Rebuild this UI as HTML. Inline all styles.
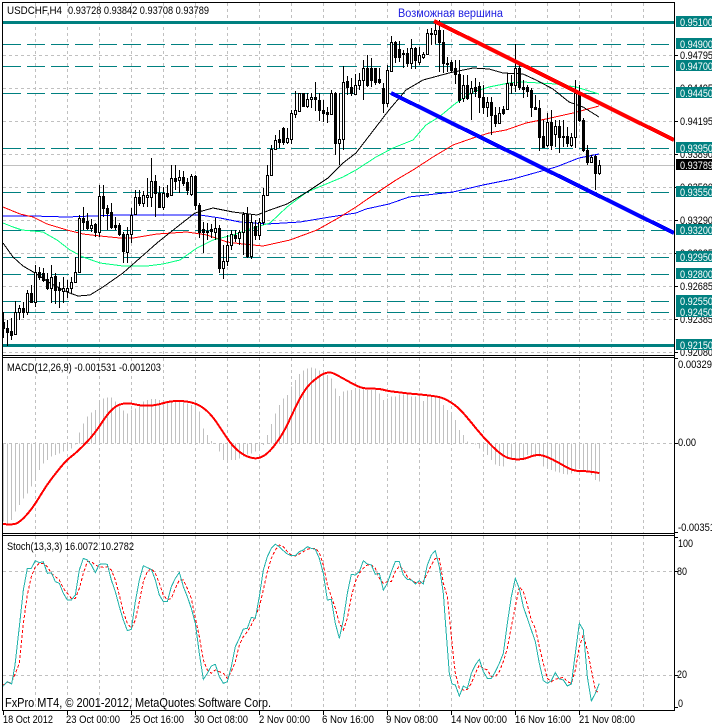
<!DOCTYPE html>
<html>
<head>
<meta charset="utf-8">
<title>USDCHF,H4</title>
<style>
html,body{margin:0;padding:0;background:#fff;}
svg{display:block;}
text{font-family:"Liberation Sans","DejaVu Sans",sans-serif;font-size:11px;fill:#000;}
.w{fill:#fff;}
.ns{vector-effect:non-scaling-stroke;fill:none;}
</style>
</head>
<body>
<svg width="712" height="727" viewBox="0 0 712 727" xmlns="http://www.w3.org/2000/svg">
<rect width="712" height="727" fill="#fff"/>

<!-- vertical grid -->
<g stroke="#c0c0c0" stroke-width="1" stroke-dasharray="3 3" fill="none" shape-rendering="crispEdges">
<path d="M35.5 3V355M67.5 3V355M99.5 3V355M131.5 3V355M163.5 3V355M195.5 3V355M227.5 3V355M259.5 3V355M291.5 3V355M323.5 3V355M355.5 3V355M387.5 3V355M419.5 3V355M451.5 3V355M483.5 3V355M515.5 3V355M547.5 3V355M579.5 3V355M611.5 3V355M643.5 3V355"/>
<path d="M3 55.5H674M3 88.5H674M3 121.5H674M3 154.5H674M3 187.5H674M3 220.5H674M3 253.5H674M3 286.5H674M3 319.5H674M3 352.5H674"/>
<path d="M35.5 358V533M67.5 358V533M99.5 358V533M131.5 358V533M163.5 358V533M195.5 358V533M227.5 358V533M259.5 358V533M291.5 358V533M323.5 358V533M355.5 358V533M387.5 358V533M419.5 358V533M451.5 358V533M483.5 358V533M515.5 358V533M547.5 358V533M579.5 358V533M611.5 358V533M643.5 358V533"/>
<path d="M3 443.5H674"/>
<path d="M35.5 536V710M67.5 536V710M99.5 536V710M131.5 536V710M163.5 536V710M195.5 536V710M227.5 536V710M259.5 536V710M291.5 536V710M323.5 536V710M355.5 536V710M387.5 536V710M419.5 536V710M451.5 536V710M483.5 536V710M515.5 536V710M547.5 536V710M579.5 536V710M611.5 536V710M643.5 536V710"/>
<path d="M3 571.5H674M3 675.5H674"/>
</g>

<!-- current price line -->
<path d="M3 165.5H674" stroke="#c0c0c0" fill="none" shape-rendering="crispEdges"/>

<!-- teal levels -->
<g stroke="#008080" fill="none" shape-rendering="crispEdges">
<path d="M3 22.5H674M3 345.5H674" stroke-width="3"/>
<path stroke-dasharray="18 6" d="M3 44.5H674M3 66.5H674M3 93.5H674M3 148.5H674M3 192.5H674M3 230.5H674M3 257.5H674M3 274.5H674M3 301.5H674M3 312.5H674"/>
</g>

<!-- moving averages -->
<g fill="none" stroke-width="1" shape-rendering="crispEdges">
<polyline stroke="#0000ff" points="3,216 33,216 67,217 117,215 157,215 200,215 220,218 240,222 267,224 300,222 330,217 356,213 366,209 389,204 409,197 453,192 483,185 513,179 556,167 579,158 599,154"/>
<polyline stroke="#ff0000" points="3,207 20,214 33,217 47,224 67,230 83,234 100,236 120,238 133,238 157,234 187,232 207,235 227,242 243,244 263,246 290,240 317,230 340,217 356,207 369,198 396,180 413,170 433,157 453,145 473,138 489,133 506,130 526,123 546,119 573,113 599,106"/>
<polyline stroke="#00ff7f" points="3,223 13,227 22,230 43,232 57,240 70,250 83,257 100,263 123,266 147,266 163,264 180,260 197,248 213,240 233,235 250,229 270,223 287,207 307,192 343,177 356,170 376,157 393,148 413,140 426,125 439,117 456,103 473,92 489,87 509,83 523,82 556,84 576,87 599,94"/>
<polyline stroke="#000000" points="3,243 13,257 23,266 35,273 50,283 67,292 78,296 90,295 103,287 123,273 140,258 157,243 177,227 195,213 213,208 233,212 257,215 270,210 287,204 307,192 328,178 343,163 356,153 366,140 376,127 389,110 406,90 423,80 449,73 473,68 489,69 503,73 523,74 536,80 553,89 569,102 583,107 599,117"/>
</g>

<!-- candle wicks -->
<path stroke="#000" stroke-width="1" fill="none" shape-rendering="crispEdges" d="M3.5 312V338M7.5 320V346M11.5 318V340M15.5 301V335M19.5 305V320M23.5 302V318M27.5 290V315M31.5 285V303M35.5 265V307M39.5 267V280M43.5 268V282M47.5 273V290M51.5 265V303M55.5 273V304M59.5 282V308M63.5 277V303M67.5 280V298M71.5 277V293M75.5 257V283M79.5 215V273M83.5 207V230M87.5 213V230M91.5 219V232M95.5 223V237M99.5 185V237M103.5 185V217M107.5 205V230M111.5 203V229M115.5 217V230M119.5 223V236M123.5 232V263M127.5 227V263M131.5 208V243M135.5 190V215M139.5 190V206M143.5 191V207M147.5 178V207M151.5 158V207M155.5 175V217M159.5 186V208M163.5 187V210M167.5 185V198M171.5 165V196M175.5 165V190M179.5 170V193M183.5 171V186M187.5 178V195M191.5 174V196M195.5 175V210M199.5 203V238M203.5 222V253M207.5 223V240M211.5 224V238M215.5 218V240M219.5 225V273M223.5 245V279M227.5 235V266M231.5 230V250M235.5 230V242M239.5 230V245M243.5 212V255M247.5 207V258M251.5 214V259M255.5 220V240M259.5 218V240M263.5 188V225M267.5 165V196M271.5 145V176M275.5 135V150M279.5 130V148M283.5 127V145M287.5 128V144M291.5 110V144M295.5 91V118M299.5 93V111M303.5 93V107M307.5 93V108M311.5 93V108M315.5 82V111M319.5 93V121M323.5 100V122M327.5 107V123M331.5 90V115M335.5 92V155M339.5 93V165M343.5 66V150M347.5 76V95M351.5 78V96M355.5 74V95M359.5 73V90M363.5 60V100M367.5 55V87M371.5 58V87M375.5 68V85M379.5 68V84M383.5 83V113M387.5 65V107M391.5 36V72M395.5 41V63M399.5 41V62M403.5 50V68M407.5 48V67M411.5 39V69M415.5 47V69M419.5 47V65M423.5 52V59M427.5 29V55M431.5 28V45M435.5 22V44M439.5 20V72M443.5 30V73M447.5 57V72M451.5 60V72M455.5 60V84M459.5 60V103M463.5 75V102M467.5 75V100M471.5 81V120M475.5 78V97M479.5 82V113M483.5 85V114M487.5 97V117M491.5 97V135M495.5 107V127M499.5 107V124M503.5 106V115M507.5 73V110M511.5 75V94M515.5 44V92M519.5 64V90M523.5 80V98M527.5 85V97M531.5 88V117M535.5 95V110M539.5 100V151M543.5 120V147M547.5 113V147M551.5 110V150M555.5 120V147M559.5 120V153M563.5 120V147M567.5 127V147M571.5 133V147M575.5 80V148M579.5 85V122M583.5 118V152M587.5 145V165M591.5 155V163M595.5 155V190M599.5 160V175"/>

<!-- bearish bodies -->
<path fill="#000" stroke="#000" stroke-width="1" shape-rendering="crispEdges" d="M2.5 322.5h2v6h-2zM6.5 328.5h2v4h-2zM10.5 331.5h2v4h-2zM22.5 308.5h2v4h-2zM30.5 293.5h2v9h-2zM38.5 272.5h2v5h-2zM42.5 273.5h2v7h-2zM46.5 279.5h2v9h-2zM54.5 276.5h2v14h-2zM58.5 288.5h2v2h-2zM82.5 218.5h2v4h-2zM86.5 221.5h2v7h-2zM94.5 224.5h2v8h-2zM102.5 196.5h2v12h-2zM106.5 208.5h2v5h-2zM110.5 212.5h2v15h-2zM114.5 225.5h2v2h-2zM118.5 225.5h2v9h-2zM122.5 234.5h2v17h-2zM138.5 197.5h2v6h-2zM154.5 181.5h2v12h-2zM158.5 193.5h2v14h-2zM166.5 193.5h2v3h-2zM174.5 178.5h2v3h-2zM182.5 177.5h2v6h-2zM186.5 182.5h2v8h-2zM194.5 176.5h2v29h-2zM198.5 205.5h2v27h-2zM202.5 229.5h2v3h-2zM206.5 231.5h2v1h-2zM210.5 229.5h2v2h-2zM218.5 228.5h2v40h-2zM234.5 235.5h2v3h-2zM246.5 214.5h2v42h-2zM254.5 226.5h2v9h-2zM278.5 139.5h2v3h-2zM282.5 128.5h2v14h-2zM302.5 93.5h2v13h-2zM314.5 97.5h2v2h-2zM318.5 100.5h2v10h-2zM322.5 110.5h2v3h-2zM326.5 112.5h2v2h-2zM334.5 93.5h2v50h-2zM346.5 81.5h2v6h-2zM350.5 87.5h2v6h-2zM366.5 68.5h2v17h-2zM370.5 68.5h2v12h-2zM374.5 68.5h2v14h-2zM378.5 79.5h2v3h-2zM382.5 88.5h2v15h-2zM394.5 42.5h2v15h-2zM398.5 49.5h2v8h-2zM402.5 53.5h2v1h-2zM406.5 53.5h2v10h-2zM414.5 48.5h2v12h-2zM430.5 33.5h2v1h-2zM438.5 30.5h2v12h-2zM442.5 42.5h2v21h-2zM446.5 63.5h2v1h-2zM450.5 62.5h2v8h-2zM454.5 68.5h2v6h-2zM458.5 74.5h2v26h-2zM466.5 85.5h2v13h-2zM474.5 87.5h2v4h-2zM478.5 86.5h2v11h-2zM482.5 97.5h2v10h-2zM490.5 102.5h2v13h-2zM494.5 115.5h2v8h-2zM502.5 109.5h2v4h-2zM510.5 83.5h2v2h-2zM518.5 68.5h2v19h-2zM522.5 87.5h2v2h-2zM526.5 87.5h2v4h-2zM530.5 90.5h2v17h-2zM534.5 107.5h2v2h-2zM538.5 108.5h2v29h-2zM542.5 136.5h2v11h-2zM550.5 122.5h2v23h-2zM558.5 126.5h2v11h-2zM562.5 136.5h2v1h-2zM566.5 136.5h2v7h-2zM578.5 93.5h2v27h-2zM582.5 120.5h2v30h-2zM586.5 150.5h2v12h-2zM594.5 156.5h2v17h-2z"/>

<!-- bullish bodies -->
<path fill="#fff" stroke="#000" stroke-width="1" shape-rendering="crispEdges" d="M14.5 312.5h2v22h-2zM18.5 308.5h2v4h-2zM26.5 293.5h2v19h-2zM34.5 272.5h2v30h-2zM50.5 277.5h2v11h-2zM62.5 288.5h2v3h-2zM66.5 288.5h2v3h-2zM70.5 282.5h2v6h-2zM74.5 272.5h2v10h-2zM78.5 218.5h2v54h-2zM90.5 225.5h2v3h-2zM98.5 196.5h2v36h-2zM126.5 234.5h2v18h-2zM130.5 215.5h2v19h-2zM134.5 197.5h2v17h-2zM142.5 195.5h2v8h-2zM146.5 195.5h2v2h-2zM150.5 181.5h2v16h-2zM162.5 193.5h2v14h-2zM170.5 178.5h2v17h-2zM178.5 177.5h2v3h-2zM190.5 176.5h2v18h-2zM214.5 228.5h2v4h-2zM222.5 261.5h2v7h-2zM226.5 245.5h2v16h-2zM230.5 234.5h2v11h-2zM238.5 232.5h2v6h-2zM242.5 214.5h2v18h-2zM250.5 222.5h2v34h-2zM258.5 222.5h2v13h-2zM262.5 195.5h2v27h-2zM266.5 175.5h2v20h-2zM270.5 149.5h2v26h-2zM274.5 140.5h2v9h-2zM286.5 138.5h2v4h-2zM290.5 113.5h2v26h-2zM294.5 110.5h2v4h-2zM298.5 93.5h2v18h-2zM306.5 99.5h2v7h-2zM310.5 97.5h2v2h-2zM330.5 93.5h2v21h-2zM338.5 139.5h2v4h-2zM342.5 82.5h2v57h-2zM354.5 85.5h2v9h-2zM358.5 80.5h2v5h-2zM362.5 68.5h2v12h-2zM386.5 70.5h2v33h-2zM390.5 42.5h2v29h-2zM410.5 48.5h2v15h-2zM418.5 55.5h2v7h-2zM422.5 54.5h2v3h-2zM426.5 33.5h2v21h-2zM434.5 30.5h2v4h-2zM462.5 85.5h2v13h-2zM470.5 88.5h2v5h-2zM486.5 102.5h2v5h-2zM498.5 113.5h2v10h-2zM506.5 83.5h2v26h-2zM514.5 68.5h2v17h-2zM546.5 122.5h2v23h-2zM554.5 126.5h2v8h-2zM570.5 137.5h2v8h-2zM574.5 93.5h2v44h-2zM590.5 157.5h2v5h-2zM598.5 165.5h2v8h-2z"/>

<!-- trend lines -->
<line x1="434" y1="21" x2="674" y2="140" stroke="#ff0000" stroke-width="4" shape-rendering="crispEdges"/>
<line x1="391" y1="93" x2="674" y2="233" stroke="#0000ff" stroke-width="4" shape-rendering="crispEdges"/>

<!-- MACD histogram -->
<g transform="translate(0,355) scale(1,0.33333)">
<path class="ns" stroke="#c0c0c0" stroke-width="1" shape-rendering="crispEdges" d="M3.5 265V500M7.5 265V505M11.5 265V495M15.5 265V470M19.5 265V450M23.5 265V430M27.5 265V415M31.5 265V395M35.5 265V375M39.5 265V345M43.5 265V325M47.5 265V315M51.5 265V305M55.5 265V300M59.5 265V295M63.5 265V290M67.5 265V288M71.5 265V280M75.5 265V268M79.5 265V233M83.5 265V205M87.5 265V185M91.5 265V172M95.5 265V165M99.5 265V140M103.5 265V130M107.5 265V127M111.5 265V127M115.5 265V140M119.5 265V155M123.5 265V167M127.5 265V175M131.5 265V163M135.5 265V160M139.5 265V150M143.5 265V140M147.5 265V135M151.5 265V132M155.5 265V132M159.5 265V135M163.5 265V137M167.5 265V140M171.5 265V140M175.5 265V140M179.5 265V135M183.5 265V135M187.5 265V145M191.5 265V150M195.5 265V150M199.5 265V170M203.5 265V220M207.5 265V240M211.5 265V258M219.5 265V290M223.5 265V315M227.5 265V318M231.5 265V315M235.5 265V315M239.5 265V310M243.5 265V305M247.5 265V298M251.5 265V295M255.5 265V290M259.5 265V285M263.5 265V270M267.5 265V240M271.5 265V207M275.5 265V175M279.5 265V150M283.5 265V130M287.5 265V120M291.5 265V95M295.5 265V75M299.5 265V57M303.5 265V47M307.5 265V40M311.5 265V37M315.5 265V40M319.5 265V47M323.5 265V52M327.5 265V60M331.5 265V70M335.5 265V100M339.5 265V123M343.5 265V110M347.5 265V107M351.5 265V105M355.5 265V105M359.5 265V100M363.5 265V100M367.5 265V105M371.5 265V105M375.5 265V105M379.5 265V115M383.5 265V135M387.5 265V130M391.5 265V125M395.5 265V125M399.5 265V118M403.5 265V118M407.5 265V118M411.5 265V125M415.5 265V125M419.5 265V125M423.5 265V138M427.5 265V125M431.5 265V125M435.5 265V125M439.5 265V130M443.5 265V150M447.5 265V165M451.5 265V180M455.5 265V195M459.5 265V225M463.5 265V240M467.5 265V260M475.5 265V268M479.5 265V280M483.5 265V290M487.5 265V300M491.5 265V315M495.5 265V328M499.5 265V333M503.5 265V335M507.5 265V312M511.5 265V310M515.5 265V312M519.5 265V310M523.5 265V310M527.5 265V300M531.5 265V305M535.5 265V300M539.5 265V305M543.5 265V335M547.5 265V340M551.5 265V345M555.5 265V350M559.5 265V352M563.5 265V357M567.5 265V358M571.5 265V355M575.5 265V345M579.5 265V340M583.5 265V345M587.5 265V350M591.5 265V360M595.5 265V375M599.5 265V380"/>
</g>

<!-- MACD signal -->
<g transform="translate(0,355) scale(0.33333)">
<path class="ns" stroke="#ff0000" stroke-width="2" stroke-linejoin="round" shape-rendering="crispEdges" d="M8 507Q40 510 50 505Q60 500 72.5 487.5Q85 475 97.5 457.5Q110 440 125 415Q140 390 157.5 367.5Q175 345 187.5 330Q200 315 217.5 301.5Q235 288 260 261.5Q285 235 302.5 207.5Q320 180 335 165Q350 150 367.5 146.5Q385 143 402.5 147.5Q420 152 442.5 152Q465 152 487.5 145Q510 138 535 138Q560 138 580 144Q600 150 617.5 165Q635 180 650 202.5Q665 225 680 247.5Q695 270 710 283.5Q725 297 740 303.5Q755 310 767.5 310Q780 310 795 300Q810 290 830 262.5Q850 235 865 202.5Q880 170 895 140Q910 110 925 92.5Q940 75 962.5 61Q985 47 1002.5 56Q1020 65 1044 78.5Q1068 92 1080.5 96.5Q1093 101 1115.5 101Q1138 101 1150.5 104.5Q1163 108 1180.5 110Q1198 112 1213 114Q1228 116 1243 117Q1258 118 1283 121Q1308 124 1320.5 127Q1333 130 1353 142.5Q1373 155 1390.5 175Q1408 195 1428 220Q1448 245 1473 270Q1498 295 1513 303.5Q1528 312 1548 313Q1568 314 1585.5 307Q1603 300 1615.5 300Q1628 300 1648 309Q1668 318 1693 333Q1718 348 1738 348Q1758 348 1778 351L1798 354"/>
</g>

<!-- Stochastic -->
<g transform="translate(0,530) scale(0.33333)" shape-rendering="crispEdges">
<polyline class="ns" stroke="#ff0000" stroke-width="1" stroke-dasharray="3 2" points="10,465 22,458 34,458 46,430 58,400 70,280 82,195 94,140 106,110 118,100 130,100 142,110 154,130 166,140 178,150 190,175 202,190 214,205 226,205 238,175 250,130 262,95 274,95 286,105 298,110 310,112 322,110 334,120 346,150 358,195 370,245 382,280 394,295 406,270 418,215 430,155 442,125 454,115 466,130 478,160 490,195 502,210 514,205 526,175 538,150 550,150 562,175 574,205 586,265 598,320 610,390 622,420 634,430 646,420 658,425 670,430 682,445 694,425 706,395 718,345 730,320 742,305 754,285 766,260 778,230 790,180 802,125 814,85 826,60 838,45 850,50 862,65 874,75 886,78 898,72 910,65 922,58 934,55 946,55 958,68 970,105 982,165 994,200 1006,235 1018,280 1030,300 1042,265 1054,200 1066,155 1078,130 1090,115 1102,105 1114,105 1126,115 1138,145 1150,160 1162,155 1174,155 1186,125 1198,108 1210,120 1222,140 1234,150 1246,158 1258,160 1270,155 1282,130 1294,105 1306,85 1318,85 1330,160 1342,200 1354,320 1366,430 1378,475 1390,480 1402,478 1414,460 1426,430 1438,405 1450,415 1462,420 1474,440 1486,440 1498,425 1510,395 1522,355 1534,290 1546,230 1558,170 1570,185 1582,225 1594,270 1606,295 1618,350 1630,400 1642,445 1654,455 1666,448 1678,445 1690,442 1702,455 1714,460 1726,420 1738,350 1750,315 1762,360 1774,420 1786,480 1798,490"/>
<polyline class="ns" stroke="#20b2aa" stroke-width="1" points="10,468 22,455 35,462 45,405 58,290 70,180 82,115 94,115 106,92 118,98 130,95 142,130 154,128 166,155 178,160 190,190 202,210 214,210 226,195 238,120 250,85 262,90 274,105 286,128 298,103 310,102 322,103 334,150 346,185 358,230 370,270 382,302 394,298 406,215 418,150 430,107 442,113 454,118 466,150 478,195 490,215 502,215 514,170 526,145 538,127 550,170 562,200 574,235 586,280 598,370 610,448 622,430 634,408 646,403 658,440 670,460 682,455 694,410 706,350 718,325 730,297 742,295 754,262 766,265 778,200 790,120 802,80 814,55 826,43 838,50 850,62 862,72 874,77 886,77 898,65 910,60 922,50 934,55 946,58 958,85 970,130 982,210 994,208 1006,280 1018,325 1030,270 1042,190 1054,133 1066,135 1078,125 1090,92 1102,102 1114,105 1126,133 1138,130 1150,180 1162,160 1174,125 1186,95 1198,95 1210,135 1222,148 1234,150 1246,162 1258,152 1270,162 1282,105 1294,75 1306,62 1318,110 1330,190 1338,300 1348,430 1356,462 1366,465 1378,498 1390,468 1402,475 1414,430 1426,405 1438,388 1450,425 1462,445 1474,445 1486,425 1498,400 1510,370 1522,280 1534,200 1546,145 1558,175 1570,230 1582,265 1594,300 1606,335 1618,400 1630,452 1642,460 1654,452 1666,428 1678,447 1690,450 1702,468 1714,462 1726,370 1738,280 1750,300 1762,440 1774,513 1786,490 1798,460"/>
</g>

<!-- frames -->
<g stroke="#000" stroke-width="1" fill="none" shape-rendering="crispEdges">
<path d="M2.5 2.5H674.5V710.5H2.5ZM2.5 355.5H674.5M2.5 357.5H674.5M2.5 533.5H674.5M2.5 535.5H674.5"/>
<path d="M675 55.5h3M675 121.5h3M675 154.5h3M675 187.5h3M675 220.5h3M675 253.5h3M675 286.5h3M675 319.5h3M675 352.5h3M675 358.5h3M675 443.5h3M675 532.5h3M675 537.5h3M675 571.5h3M675 675.5h3M675 707.5h3"/>
<path d="M3.5 711v4M67.5 711v4M131.5 711v4M195.5 711v4M259.5 711v4M323.5 711v4M387.5 711v4M451.5 711v4M515.5 711v4M579.5 711v4"/>
</g>

<!-- price axis labels -->
<text x="680" y="59" textLength="33" lengthAdjust="spacingAndGlyphs">0.94795</text>
<text x="680" y="92" textLength="33" lengthAdjust="spacingAndGlyphs">0.94495</text>
<text x="680" y="125" textLength="33" lengthAdjust="spacingAndGlyphs">0.94195</text>
<text x="680" y="158" textLength="33" lengthAdjust="spacingAndGlyphs">0.93890</text>
<text x="680" y="191" textLength="33" lengthAdjust="spacingAndGlyphs">0.93590</text>
<text x="680" y="224" textLength="33" lengthAdjust="spacingAndGlyphs">0.93290</text>
<text x="680" y="257" textLength="33" lengthAdjust="spacingAndGlyphs">0.92985</text>
<text x="680" y="290" textLength="33" lengthAdjust="spacingAndGlyphs">0.92685</text>
<text x="680" y="323" textLength="33" lengthAdjust="spacingAndGlyphs">0.92385</text>
<text x="680" y="356" textLength="33" lengthAdjust="spacingAndGlyphs">0.92080</text>

<g fill="#008080" shape-rendering="crispEdges">
<rect x="676" y="16" width="36" height="11"/>
<rect x="676" y="38" width="36" height="11"/>
<rect x="676" y="60" width="36" height="11"/>
<rect x="676" y="87" width="36" height="11"/>
<rect x="676" y="142" width="36" height="11"/>
<rect x="676" y="186" width="36" height="11"/>
<rect x="676" y="224" width="36" height="11"/>
<rect x="676" y="251" width="36" height="11"/>
<rect x="676" y="268" width="36" height="11"/>
<rect x="676" y="295" width="36" height="11"/>
<rect x="676" y="306" width="36" height="11"/>
<rect x="676" y="339" width="36" height="11"/>
</g>
<rect x="676" y="159" width="36" height="11" fill="#000"/>
<g>
<text class="w" x="680" y="26" textLength="33" lengthAdjust="spacingAndGlyphs">0.95100</text>
<text class="w" x="680" y="48" textLength="33" lengthAdjust="spacingAndGlyphs">0.94900</text>
<text class="w" x="680" y="70" textLength="33" lengthAdjust="spacingAndGlyphs">0.94700</text>
<text class="w" x="680" y="97" textLength="33" lengthAdjust="spacingAndGlyphs">0.94450</text>
<text class="w" x="680" y="152" textLength="33" lengthAdjust="spacingAndGlyphs">0.93950</text>
<text class="w" x="680" y="196" textLength="33" lengthAdjust="spacingAndGlyphs">0.93550</text>
<text class="w" x="680" y="234" textLength="33" lengthAdjust="spacingAndGlyphs">0.93200</text>
<text class="w" x="680" y="261" textLength="33" lengthAdjust="spacingAndGlyphs">0.92950</text>
<text class="w" x="680" y="278" textLength="33" lengthAdjust="spacingAndGlyphs">0.92800</text>
<text class="w" x="680" y="305" textLength="33" lengthAdjust="spacingAndGlyphs">0.92550</text>
<text class="w" x="680" y="316" textLength="33" lengthAdjust="spacingAndGlyphs">0.92450</text>
<text class="w" x="680" y="349" textLength="33" lengthAdjust="spacingAndGlyphs">0.92150</text>
<text class="w" x="680" y="169" textLength="33" lengthAdjust="spacingAndGlyphs">0.93789</text>
</g>

<!-- indicator axis labels -->
<text x="678" y="368" textLength="34" lengthAdjust="spacingAndGlyphs">0.00329</text>
<text x="678" y="446" textLength="18" lengthAdjust="spacingAndGlyphs">0.00</text>
<text x="678" y="531" textLength="37" lengthAdjust="spacingAndGlyphs">-0.00351</text>
<text x="678" y="547" textLength="15" lengthAdjust="spacingAndGlyphs">100</text>
<text x="677" y="575" textLength="10" lengthAdjust="spacingAndGlyphs">80</text>
<text x="677" y="678" textLength="10" lengthAdjust="spacingAndGlyphs">20</text>
<text x="678" y="707" textLength="5" lengthAdjust="spacingAndGlyphs">0</text>

<!-- titles -->
<text x="7" y="14" textLength="55" lengthAdjust="spacingAndGlyphs">USDCHF,H4</text>
<text x="68" y="14" textLength="141" lengthAdjust="spacingAndGlyphs">0.93728 0.93842 0.93708 0.93789</text>
<text x="398" y="17" textLength="105" lengthAdjust="spacingAndGlyphs" style="fill:#2020e0;font-size:11.5px">Возможная вершина</text>
<text x="7" y="371" textLength="154" lengthAdjust="spacingAndGlyphs">MACD(12,26,9) -0.001531 -0.001203</text>
<text x="7" y="550" textLength="127" lengthAdjust="spacingAndGlyphs">Stoch(13,3,3) 16.0072 10.2782</text>
<text x="5" y="707" textLength="266" lengthAdjust="spacingAndGlyphs" style="font-size:12.5px">FxPro MT4, © 2001-2012, MetaQuotes Software Corp.</text>

<!-- time axis labels -->
<text x="3" y="723" textLength="50" lengthAdjust="spacingAndGlyphs">18 Oct 2012</text>
<text x="66" y="723" textLength="54" lengthAdjust="spacingAndGlyphs">23 Oct 00:00</text>
<text x="130" y="723" textLength="54" lengthAdjust="spacingAndGlyphs">25 Oct 16:00</text>
<text x="194" y="723" textLength="54" lengthAdjust="spacingAndGlyphs">30 Oct 08:00</text>
<text x="259" y="723" textLength="51" lengthAdjust="spacingAndGlyphs">2 Nov 00:00</text>
<text x="322" y="723" textLength="52" lengthAdjust="spacingAndGlyphs">6 Nov 16:00</text>
<text x="386" y="723" textLength="52" lengthAdjust="spacingAndGlyphs">9 Nov 08:00</text>
<text x="451" y="723" textLength="56" lengthAdjust="spacingAndGlyphs">14 Nov 00:00</text>
<text x="515" y="723" textLength="56" lengthAdjust="spacingAndGlyphs">16 Nov 16:00</text>
<text x="579" y="723" textLength="56" lengthAdjust="spacingAndGlyphs">21 Nov 08:00</text>
</svg>
</body>
</html>
